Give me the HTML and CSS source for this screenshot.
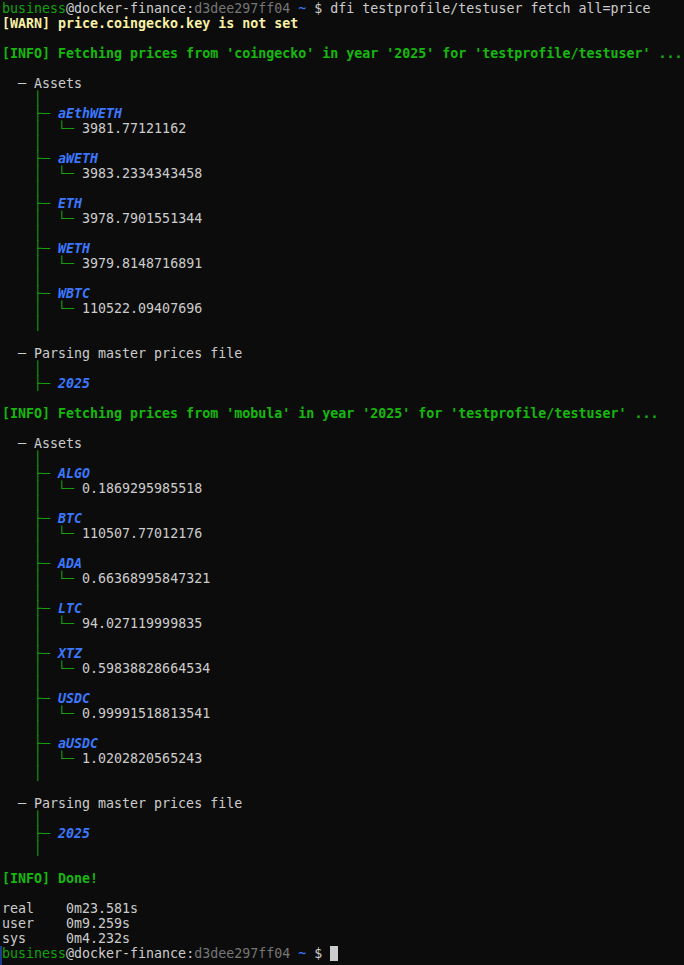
FILE: index.html
```html
<!DOCTYPE html>
<html>
<head>
<meta charset="utf-8">
<link rel="stylesheet" href="styles.css">
</head>
<body>
<div class="marker"></div>
<pre class="term"><span class="g">business</span>@docker-finance:<span class="d">d3dee297ff04</span> <span class="b">~</span> $ dfi testprofile/testuser fetch all=price
<span class="warn">[WARN] price.coingecko.key is not set</span>

<span class="info">[INFO] Fetching prices from 'coingecko' in year '2025' for 'testprofile/testuser' ...</span>

  ─ Assets
    <span class="t">│</span>
    <span class="t">├─</span> <span class="n">aEthWETH</span>
    <span class="t">│  └─</span> 3981.77121162
    <span class="t">│</span>
    <span class="t">├─</span> <span class="n">aWETH</span>
    <span class="t">│  └─</span> 3983.2334343458
    <span class="t">│</span>
    <span class="t">├─</span> <span class="n">ETH</span>
    <span class="t">│  └─</span> 3978.7901551344
    <span class="t">│</span>
    <span class="t">├─</span> <span class="n">WETH</span>
    <span class="t">│  └─</span> 3979.8148716891
    <span class="t">│</span>
    <span class="t">├─</span> <span class="n">WBTC</span>
    <span class="t">│  └─</span> 110522.09407696
    <span class="t">│</span>

  ─ Parsing master prices file
    <span class="t">│</span>
    <span class="t">├─</span> <span class="n">2025</span>

<span class="info">[INFO] Fetching prices from 'mobula' in year '2025' for 'testprofile/testuser' ...</span>

  ─ Assets
    <span class="t">│</span>
    <span class="t">├─</span> <span class="n">ALGO</span>
    <span class="t">│  └─</span> 0.1869295985518
    <span class="t">│</span>
    <span class="t">├─</span> <span class="n">BTC</span>
    <span class="t">│  └─</span> 110507.77012176
    <span class="t">│</span>
    <span class="t">├─</span> <span class="n">ADA</span>
    <span class="t">│  └─</span> 0.66368995847321
    <span class="t">│</span>
    <span class="t">├─</span> <span class="n">LTC</span>
    <span class="t">│  └─</span> 94.027119999835
    <span class="t">│</span>
    <span class="t">├─</span> <span class="n">XTZ</span>
    <span class="t">│  └─</span> 0.59838828664534
    <span class="t">│</span>
    <span class="t">├─</span> <span class="n">USDC</span>
    <span class="t">│  └─</span> 0.99991518813541
    <span class="t">│</span>
    <span class="t">├─</span> <span class="n">aUSDC</span>
    <span class="t">│  └─</span> 1.0202820565243
    <span class="t">│</span>

  ─ Parsing master prices file
    <span class="t">│</span>
    <span class="t">├─</span> <span class="n">2025</span>
    <span class="t">│</span>

<span class="info">[INFO] Done!</span>

real    0m23.581s
user    0m9.259s
sys     0m4.232s
<span class="g">business</span>@docker-finance:<span class="d">d3dee297ff04</span> <span class="b">~</span> $ <span class="cursor"> </span></pre>
</body>
</html>
```
FILE: styles.css
```css
html, body {
  margin: 0;
  padding: 0;
  background: #0c0c0c;
  height: 100%;
}
body {
  position: relative;
  overflow: hidden;
}
.term {
  margin: 0;
  padding: 1px 0 0 2px;
  font-family: "DejaVu Sans Mono", monospace;
  font-size: 13.3px;
  line-height: 15px;
  color: #cccccc;
  white-space: pre;
}
.g { color: #13a10e; }
.d { color: #767676; }
.b { color: #3b78ff; }
.warn { color: #f9f1a5; font-weight: bold; }
.info { color: #16b80e; font-weight: bold; }
.t { color: #13a10e; }
.n { color: #3b78ff; font-weight: bold; font-style: italic; }
.cursor {
  display: inline-block;
  width: 8px;
  height: 15px;
  background: #cccccc;
  vertical-align: top;
  margin-top: 0;
}
.marker {
  position: absolute;
  left: 0;
  top: 946px;
  width: 2px;
  height: 19px;
  background: #1b3c8c;
}
```
